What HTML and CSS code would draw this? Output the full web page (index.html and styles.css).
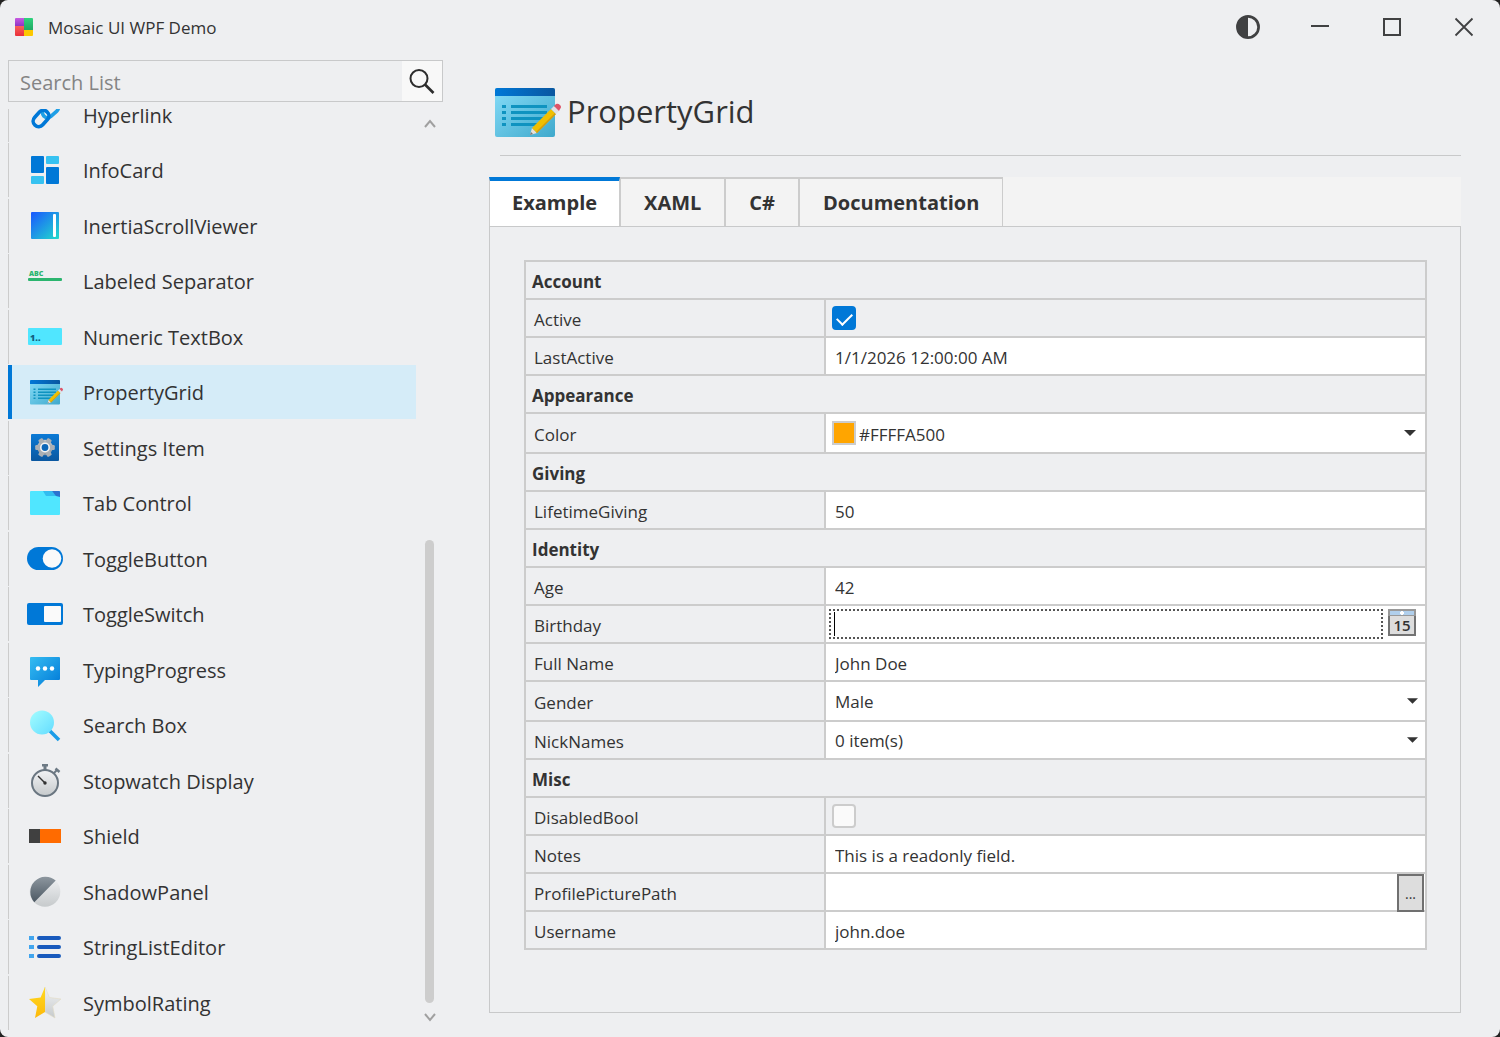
FILE: index.html
```html
<!DOCTYPE html>
<html lang="en">
<head>
<meta charset="utf-8">
<title>Mosaic UI WPF Demo</title>
<meta name="viewport" content="width=device-width, initial-scale=1">
<link rel="stylesheet" href="styles.css">
</head>
<body>
<svg class="defs" aria-hidden="true">
  <defs>
    <linearGradient id="paper" x1="0" y1="0" x2="1" y2="1"><stop offset="0" stop-color="#86dcf8"/><stop offset="1" stop-color="#3fa9cc"/></linearGradient>
    <linearGradient id="bar" x1="0" x2="1"><stop offset="0" stop-color="#0078d7"/><stop offset="1" stop-color="#0a57a0"/></linearGradient>
    <linearGradient id="purple" x1="0" y1="0" x2="0" y2="1"><stop offset="0" stop-color="#c75ae0"/><stop offset="1" stop-color="#8e35c4"/></linearGradient>
    <linearGradient id="red" x1="0" y1="0" x2="0" y2="1"><stop offset="0" stop-color="#f8605a"/><stop offset="1" stop-color="#ea2f3a"/></linearGradient>
    <linearGradient id="green" x1="0" y1="0" x2="0" y2="1"><stop offset="0" stop-color="#2fd27d"/><stop offset="1" stop-color="#21a863"/></linearGradient>
    <linearGradient id="scroll" x1="0" y1="0" x2="1" y2="1"><stop offset="0" stop-color="#1a57ff"/><stop offset="1" stop-color="#22dccb"/></linearGradient>
    <linearGradient id="tile" x1="0" y1="0" x2="0" y2="1"><stop offset="0" stop-color="#0b7ad6"/><stop offset="1" stop-color="#0a57a0"/></linearGradient>
    <linearGradient id="gear" x1="0" y1="0" x2="0" y2="1"><stop offset="0" stop-color="#c3c7cb"/><stop offset="1" stop-color="#8b959f"/></linearGradient>
    <linearGradient id="bubble" x1="0" y1="0" x2="1" y2="1"><stop offset="0" stop-color="#35bdf2"/><stop offset="1" stop-color="#0078d7"/></linearGradient>
    <linearGradient id="lens" x1="0" y1="0" x2="1" y2="1"><stop offset="0" stop-color="#a4fdff"/><stop offset="1" stop-color="#63dcff"/></linearGradient>
    <linearGradient id="steel" x1="0" y1="0" x2="0" y2="1"><stop offset="0" stop-color="#8d979f"/><stop offset="1" stop-color="#4c5863"/></linearGradient>
    <linearGradient id="silver" x1="0" y1="0" x2="0" y2="1"><stop offset="0" stop-color="#f2f3f5"/><stop offset="1" stop-color="#c6cacc"/></linearGradient>
    <linearGradient id="gold" x1="0" y1="0" x2="0" y2="1"><stop offset="0" stop-color="#ffd91f"/><stop offset="1" stop-color="#fdb90b"/></linearGradient>
    <symbol id="icon-grid" viewBox="0 0 66 50">
      <rect x="0" y="0" width="60" height="49" rx="2" fill="url(#paper)"/>
      <path d="M2 0h56q2 0 2 2v6H0V2q0-2 2-2z" fill="url(#bar)"/>
      <path d="M7 17h4v3H7zM7 23h4v3H7zM7 29h4v3H7zM7 35h4v3H7zM16 17h36v3H16zM16 23h36v3H16zM16 29h32v3H16zM16 35h26v3H16z" fill="#0f93c0"/>
      <path d="M35 47l2-7 5 5z" fill="#e8e0d8"/>
      <path d="M35 47l1-3 2 2z" fill="#777"/>
      <path d="M37 40l19-19 5 5-19 19z" fill="#f0bf00"/>
      <path d="M41 44l19-19 1 1-19 19z" fill="#cf9b12"/>
      <path d="M56 21l3-3 5 5-3 3z" fill="#dfe1e6"/>
      <path d="M59 18l2-2q2-1 4 1t0 4l-1 2z" fill="#dd5468"/>
    </symbol>
  </defs>
</svg>
<div class="window">
  <header class="titlebar">
    <svg class="logo" viewBox="0 0 18 18" aria-hidden="true"><path d="M1 0h8v8H0V1q0-1 1-1z" fill="url(#purple)"/><path d="M9 0h8q1 0 1 1v11H9z" fill="url(#green)"/><path d="M0 8h9v10H1q-1 0-1-1z" fill="url(#red)"/><path d="M9 12h9v5q0 1-1 1H9z" fill="#fcc800"/></svg>
    <h1 class="app-name">Mosaic UI WPF Demo</h1>
    <button class="caption" aria-label="Toggle theme"><svg width="24" height="24" viewBox="0 0 24 24"><circle cx="12" cy="12" r="10.6" fill="none" stroke="#404142" stroke-width="2.7"/><path d="M12 1a11 11 0 000 22z" fill="#404142"/></svg></button>
    <button class="caption" aria-label="Minimize"><svg width="20" height="20" viewBox="0 0 20 20"><path d="M1 8h18v2H1z" fill="#404142"/></svg></button>
    <button class="caption" aria-label="Maximize"><svg width="20" height="20" viewBox="0 0 20 20"><path d="M2 2h16v16H2z" fill="none" stroke="#404142" stroke-width="2"/></svg></button>
    <button class="caption" aria-label="Close"><svg width="20" height="20" viewBox="0 0 20 20"><path d="M1.500 1.500l17 17M18.500 1.500l-17 17" fill="none" stroke="#404142" stroke-width="1.800"/></svg></button>
  </header>
  <div class="body">
    <aside class="sidebar">
      <form class="search" role="search">
        <input class="search-input" type="search" placeholder="Search List" aria-label="Search List">
        <button class="search-button" type="button" aria-label="Search"><svg width="26" height="26" viewBox="0 0 26 26"><circle cx="10" cy="10.500" r="8.500" fill="none" stroke="#2d2d2d" stroke-width="2"/><path d="M16 16.500l8.500 8.500" stroke="#2d2d2d" stroke-width="2.600"/></svg></button>
      </form>
      <div class="list-area">
        <nav class="list-view" aria-label="Controls">
          <ul class="list">
            <li class="entry"><a class="link" href="#hyperlink"><svg class="icon" viewBox="0 0 36 36"><g fill="none" stroke-width="3.600"><rect x="-5" y="-9" width="10" height="18" rx="5" transform="translate(23.500 13) rotate(48)" stroke="#1f9fe6"/><rect x="-5.500" y="-9" width="11" height="18" rx="5.500" transform="translate(14 21.500) rotate(42)" stroke="#0078d7"/></g></svg>Hyperlink</a></li>
            <li class="entry"><a class="link" href="#infocard"><svg class="icon" viewBox="0 0 36 36"><rect x="4" y="4" width="13" height="17" rx="1" fill="#0078d7"/><rect x="19" y="15" width="13" height="17" rx="1" fill="#0078d7"/><rect x="19" y="4" width="13" height="8" rx="1" fill="#37c2f1"/><rect x="4" y="24" width="13" height="8" rx="1" fill="#37c2f1"/></svg>InfoCard</a></li>
            <li class="entry"><a class="link" href="#inertia"><svg class="icon" viewBox="0 0 36 36"><rect x="4" y="4" width="28" height="27" rx="1" fill="url(#scroll)"/><rect x="26" y="6" width="3" height="23" rx="1" fill="#fff"/></svg>InertiaScrollViewer</a></li>
            <li class="entry"><a class="link" href="#separator"><svg class="icon" viewBox="0 0 36 36"><text x="2" y="13" class="glyph-abc">ABC</text><rect x="1" y="15" width="34" height="3" rx="1" fill="#2bb56f"/></svg>Labeled Separator</a></li>
            <li class="entry"><a class="link" href="#numeric"><svg class="icon" viewBox="0 0 36 36"><rect x="1" y="9" width="34" height="17" rx="1" fill="#50e6ff"/><text x="3" y="22" class="glyph-num">1..</text></svg>Numeric TextBox</a></li>
            <li class="entry selected"><a class="link" href="#propertygrid" aria-current="page"><svg class="icon" viewBox="0 0 36 36"><use href="#icon-grid" x="3" y="6" width="33" height="25"/></svg>PropertyGrid</a></li>
            <li class="entry"><a class="link" href="#settings"><svg class="icon" viewBox="0 0 36 36"><rect x="4" y="4" width="28" height="27" rx="1" fill="url(#tile)"/><g fill="#a9afb5" transform="translate(18 17.500)"><circle r="7.800" fill="url(#gear)"/><rect x="-9.800" y="-2.500" width="19.600" height="5" rx="1.200"/><rect x="-9.800" y="-2.500" width="19.600" height="5" rx="1.200" transform="rotate(60)"/><rect x="-9.800" y="-2.500" width="19.600" height="5" rx="1.200" transform="rotate(120)"/></g><circle cx="18" cy="17.500" r="4.200" fill="#0b66b8" stroke="#f3f3f3" stroke-width="1.600"/></svg>Settings Item</a></li>
            <li class="entry"><a class="link" href="#tab"><svg class="icon" viewBox="0 0 36 36"><rect x="3" y="6" width="30" height="24" rx="1" fill="#50e6ff"/><path d="M16 6h9l5 5H19z" fill="#32bdf0"/><path d="M25 6h7q1 0 1 1v5l-4-1z" fill="#2b72cf"/></svg>Tab Control</a></li>
            <li class="entry"><a class="link" href="#togglebutton"><svg class="icon" viewBox="0 0 36 36"><rect x="0" y="6" width="36" height="23" rx="11.500" fill="#0078d7"/><circle cx="25" cy="17.500" r="9.300" fill="#fafafa"/></svg>ToggleButton</a></li>
            <li class="entry"><a class="link" href="#toggleswitch"><svg class="icon" viewBox="0 0 36 36"><rect x="0" y="7" width="36" height="22" rx="2" fill="#0078d7"/><rect x="17" y="10" width="17" height="16" rx="1" fill="#fafafa"/></svg>ToggleSwitch</a></li>
            <li class="entry"><a class="link" href="#typing"><svg class="icon" viewBox="0 0 36 36"><path d="M4 5h28q1 0 1 1v21q0 1-1 1H18l-7 7v-7H4q-1 0-1-1V6q0-1 1-1z" fill="url(#bubble)"/><circle cx="11" cy="16.500" r="2.200" fill="#fff"/><circle cx="18" cy="16.500" r="2.200" fill="#fff"/><circle cx="25" cy="16.500" r="2.200" fill="#fff"/></svg>TypingProgress</a></li>
            <li class="entry"><a class="link" href="#searchbox"><svg class="icon" viewBox="0 0 36 36"><path d="M22 23l10 10" stroke="#1b9ce8" stroke-width="3.600"/><circle cx="15" cy="15.500" r="12" fill="url(#lens)"/></svg>Search Box</a></li>
            <li class="entry"><a class="link" href="#stopwatch"><svg class="icon" viewBox="0 0 36 36"><path d="M15 1h6v2.500h-1.500V7h-3V3.500H15z" fill="#6c7984"/><path d="M27 10l3-3" stroke="#6c7984" stroke-width="2"/><path d="M28.500 5.500l4 3.500" stroke="#6c7984" stroke-width="2.500"/><circle cx="18" cy="20" r="13" fill="url(#silver)" stroke="#6a7681" stroke-width="2"/><path d="M11 13l7 7" stroke="#333" stroke-width="1.400"/><circle cx="18" cy="20" r="1.700" fill="#333"/></svg>Stopwatch Display</a></li>
            <li class="entry"><a class="link" href="#shield"><svg class="icon" viewBox="0 0 36 36"><rect x="2" y="11" width="11" height="14" fill="#404040"/><rect x="13" y="11" width="21" height="14" fill="#ff6b00"/></svg>Shield</a></li>
            <li class="entry"><a class="link" href="#shadow"><svg class="icon" viewBox="0 0 36 36"><circle cx="18" cy="17.500" r="15.300" fill="url(#silver)"/><path d="M7.300 28.300A15.300 15.300 0 0128.700 6.500z" fill="url(#steel)"/></svg>ShadowPanel</a></li>
            <li class="entry"><a class="link" href="#stringlist"><svg class="icon" viewBox="0 0 36 36"><path d="M2 7h5v4H2zM2 16h5v4H2zM2 25h5v4H2z" fill="#41a5ee"/><path d="M12 9h20M12 18h20M12 27h20" stroke="#185abd" stroke-width="4" stroke-linecap="round"/></svg>StringListEditor</a></li>
            <li class="entry"><a class="link" href="#rating"><svg class="icon" viewBox="0 0 36 36"><path d="M18 2l4.400 10.500L34 14l-8.300 7.300L28 33l-10-6z" fill="url(#silver)" stroke="#e3dcc4" stroke-width=".6"/><path d="M18 2l-4.400 10.500L2 14l8.300 7.300L8 33l10-6z" fill="url(#gold)"/></svg>SymbolRating</a></li>
          </ul>
        </nav>
        <div class="scrollbar" aria-hidden="true">
          <svg class="arrow" viewBox="0 0 12 10"><path d="M1 8l5-6 5 6" fill="none" stroke="#a0a0a0" stroke-width="2"/></svg>
          <div class="track"><div class="thumb"></div></div>
          <svg class="arrow" viewBox="0 0 12 10"><path d="M1 2l5 6 5-6" fill="none" stroke="#a0a0a0" stroke-width="2"/></svg>
        </div>
      </div>
    </aside>
    <main class="content">
      <div class="page-head">
        <svg class="page-icon" viewBox="0 0 66 50" aria-hidden="true"><use href="#icon-grid"/></svg>
        <h2 class="page-title">PropertyGrid</h2>
      </div>
      <div class="tabs" role="tablist">
        <button class="tab active" role="tab" aria-selected="true">Example</button>
        <button class="tab" role="tab" aria-selected="false">XAML</button>
        <button class="tab" role="tab" aria-selected="false">C#</button>
        <button class="tab" role="tab" aria-selected="false">Documentation</button>
      </div>
      <section class="panel">
        <table class="grid">
          <colgroup><col class="names"><col></colgroup>
          <tbody>
            <tr><th class="group" colspan="2" scope="rowgroup">Account</th></tr>
            <tr><th class="name" scope="row"><label for="active">Active</label></th><td><input class="check" id="active" type="checkbox" checked></td></tr>
            <tr><th class="name" scope="row"><label for="last">LastActive</label></th><td class="edit"><input class="text" id="last" type="text" value="1/1/2026 12:00:00 AM"></td></tr>
            <tr><th class="group" colspan="2" scope="rowgroup">Appearance</th></tr>
            <tr class="tall"><th class="name" scope="row"><label for="color">Color</label></th><td class="edit"><div class="picker"><span class="swatch"></span><select class="select" id="color"><option>#FFFFA500</option></select><svg class="drop" viewBox="0 0 12 6"><path d="M0 0h12L6 6z"/></svg></div></td></tr>
            <tr><th class="group" colspan="2" scope="rowgroup">Giving</th></tr>
            <tr><th class="name" scope="row"><label for="giving">LifetimeGiving</label></th><td class="edit"><input class="text" id="giving" type="text" value="50"></td></tr>
            <tr><th class="group" colspan="2" scope="rowgroup">Identity</th></tr>
            <tr><th class="name" scope="row"><label for="age">Age</label></th><td class="edit"><input class="text" id="age" type="text" value="42"></td></tr>
            <tr><th class="name" scope="row"><label for="birthday">Birthday</label></th><td class="edit"><div class="date"><input class="date-input" id="birthday" type="text"><button class="calendar" aria-label="Show calendar"><span class="calendar-top"></span>15</button></div></td></tr>
            <tr><th class="name" scope="row"><label for="full">Full Name</label></th><td class="edit"><input class="text" id="full" type="text" value="John Doe"></td></tr>
            <tr class="tall"><th class="name" scope="row"><label for="gender">Gender</label></th><td class="edit"><div class="combo"><select class="select" id="gender"><option>Male</option></select><svg class="drop" viewBox="0 0 12 6"><path d="M0 0h12L6 6z"/></svg></div></td></tr>
            <tr><th class="name" scope="row"><label for="nick">NickNames</label></th><td class="edit"><div class="combo"><select class="select" id="nick"><option>0 item(s)</option></select><svg class="drop" viewBox="0 0 12 6"><path d="M0 0h12L6 6z"/></svg></div></td></tr>
            <tr><th class="group" colspan="2" scope="rowgroup">Misc</th></tr>
            <tr><th class="name" scope="row"><label for="disabled">DisabledBool</label></th><td><input class="check" id="disabled" type="checkbox" disabled></td></tr>
            <tr><th class="name" scope="row"><label for="notes">Notes</label></th><td class="edit"><input class="text" id="notes" type="text" value="This is a readonly field." readonly></td></tr>
            <tr><th class="name" scope="row"><label for="path">ProfilePicturePath</label></th><td class="edit"><div class="file"><input class="text" id="path" type="text"><button class="browse" aria-label="Browse">...</button></div></td></tr>
            <tr><th class="name" scope="row"><label for="user">Username</label></th><td class="edit"><input class="text" id="user" type="text" value="john.doe"></td></tr>
          </tbody>
        </table>
      </section>
    </main>
  </div>
</div>
</body>
</html>
```
FILE: styles.css
```css
* {
  box-sizing: border-box;
}

body {
  margin: 0;
  background: #222;
  color: #333;
  font-family: "Open Sans", "Noto Sans", sans-serif;
  font-size: 16px;
}

button,
input,
select {
  margin: 0;
  padding: 0;
  border: 0;
  border-radius: 0;
  background: none;
  color: inherit;
  font: inherit;
}

.defs {
  display: block;
  width: 0;
  height: 0;
}

.window {
  display: flex;
  flex-direction: column;
  height: 100vh;
  border-radius: 8px;
  background: #eeeff1;
  overflow: hidden;
}

/* Title bar */
.titlebar {
  display: flex;
  align-items: center;
  height: 54px;
  padding-left: 15px;
}

.logo {
  width: 18px;
  height: 18px;
}

.app-name {
  flex: 1;
  margin: 0 0 0 15px;
  font-size: 17px;
  font-weight: 400;
}

.caption {
  display: flex;
  align-items: center;
  justify-content: center;
  width: 72px;
  height: 54px;
}

.body {
  display: flex;
  flex: 1;
  min-height: 0;
}

/* Sidebar */
.sidebar {
  display: flex;
  flex-direction: column;
  width: 443px;
  padding: 6px 0 6px 8px;
}

.search {
  display: flex;
  flex: none;
  height: 42px;
  border: 1px solid #c8c9ca;
}

.search-input {
  flex: 1;
  min-width: 0;
  padding: 2px 0 0 11px;
  font-size: 20px;
}

.search-input::placeholder {
  color: #848484;
}

.search-button {
  display: flex;
  align-items: center;
  justify-content: center;
  width: 40px;
  background: #f8f8f8;
}

.list-area {
  display: flex;
  flex: 1;
  min-height: 0;
  margin-top: 7px;
}

.list-view {
  display: flex;
  flex: 1;
  flex-direction: column;
  justify-content: flex-end;
  overflow: hidden;
}

.list {
  margin: 0;
  padding: 0;
  list-style: none;
}

.entry {
  height: 55px;
}

.entry:nth-child(even) {
  height: 56px;
}

.link {
  display: flex;
  align-items: center;
  gap: 20px;
  height: 54px;
  padding-left: 18px;
  border-left: 1px solid #ccc;
  color: inherit;
  font-size: 20px;
  text-decoration: none;
}

.selected .link {
  padding-left: 15px;
  border-left: 4px solid #0078d7;
  background: #d5ecf8;
}

.icon {
  flex: none;
  width: 36px;
  height: 36px;
}

.glyph-abc {
  fill: #2bb56f;
  font-size: 7px;
  font-weight: 800;
}

.glyph-num {
  fill: #12607f;
  font-size: 9px;
  font-weight: 800;
}

.scrollbar {
  display: flex;
  flex-direction: column;
  align-items: center;
  width: 27px;
  padding: 10px 0 9px;
}

.arrow {
  width: 12px;
  height: 10px;
}

.track {
  display: flex;
  flex: 1;
  flex-direction: column;
  justify-content: flex-end;
  padding-bottom: 9px;
}

.thumb {
  width: 9px;
  height: 53%;
  border-radius: 5px;
  background: #cdcdcd;
}

/* Page */
.content {
  display: flex;
  flex: 1;
  flex-direction: column;
  min-width: 0;
  padding: 26px 39px 24px 46px;
}

.page-head {
  display: flex;
  align-items: center;
  gap: 6px;
  height: 76px;
  margin-bottom: 21px;
  padding: 0 0 10px 6px;
  background: linear-gradient(#c8c9ca, #c8c9ca) 11px 100% / 100% 1px no-repeat;
}

.page-icon {
  width: 66px;
  height: 50px;
}

.page-title {
  margin: 0;
  padding-bottom: 4px;
  font-size: 31px;
  font-weight: 400;
}

.tabs {
  display: flex;
  height: 49px;
  background: #f3f3f3;
}

.tab {
  padding: 0 23px;
  border: 2px solid #ccc;
  border-width: 2px 1px 0;
  font-size: 20px;
  font-weight: 700;
}

.tab.active {
  padding: 0 22px 2px;
  border-top: 4px solid #0078d7;
  background: #fff;
}

.panel {
  flex: 1;
  padding: 33px 33px 0 34px;
  border: 1px solid #c8c9ca;
}

/* Property grid */
.grid {
  width: 100%;
  border-collapse: collapse;
  table-layout: fixed;
}

.names {
  width: 300px;
}

tr {
  height: 38px;
}

.tall {
  height: 40px;
}

th,
td {
  height: inherit;
  padding: 0;
  border: 2px solid #ccc;
  text-align: left;
}

.group {
  padding: 2px 0 0 6px;
  font-size: 17px;
  font-weight: 700;
}

.name {
  padding: 2px 0 0 8px;
  font-size: 17px;
  font-weight: 400;
}

.edit {
  background: #fff;
}

.text {
  display: block;
  width: 100%;
  height: 36px;
  padding: 2px 0 0 9px;
  font-size: 17px;
}

.check {
  display: block;
  width: 24px;
  height: 24px;
  margin-left: 6px;
  border: 2px solid #ccc;
  border-radius: 4px;
  background: #fafafa;
  appearance: none;
}

.check:checked {
  border-color: #0078d7;
  background: #0078d7;
}

.check:checked::before {
  content: "";
  display: block;
  width: 13px;
  height: 7px;
  margin: 5px 0 0 3px;
  border: solid #fff;
  border-width: 0 0 2px 2px;
  transform: rotate(-45deg);
}

.combo,
.picker {
  display: flex;
  align-items: center;
  height: 36px;
  padding-right: 7px;
}

.picker {
  gap: 3px;
  padding: 0 9px 0 6px;
}

.swatch {
  width: 24px;
  height: 24px;
  border: 2px solid #ccc;
  background: #ffa500;
}

.select {
  flex: 1;
  min-width: 0;
  height: 36px;
  padding-top: 2px;
  font-size: 17px;
  appearance: none;
}

.combo .select {
  padding: 0 0 0 9px;
}

.drop {
  width: 12px;
  height: 6px;
  fill: #333;
}

.combo .drop {
  width: 11px;
}

.date {
  display: flex;
  align-items: flex-start;
  gap: 5px;
  height: 36px;
  padding: 3px 9px 0 3px;
}

.date-input {
  flex: 1;
  min-width: 0;
  height: 30px;
  border: 2px dotted #555;
  outline: 0;
  background: linear-gradient(#000, #000) 3px 50% / 1px 24px no-repeat;
}

.calendar {
  display: flex;
  flex-direction: column;
  align-items: stretch;
  width: 28px;
  height: 27px;
  border: 2px solid #737373;
  border-top: 0;
  background: #ddd;
  font-size: 15px;
  font-weight: 600;
  line-height: 18px;
}

.calendar-top {
  height: 8px;
  margin: 0 -2px;
  border: 2px solid #999;
  border-bottom-width: 1px;
  background: radial-gradient(circle, #fff 2px, #b0cfec 2px);
}

.file {
  display: flex;
  padding-right: 1px;
}

.browse {
  width: 28px;
  height: 38px;
  margin-bottom: -2px;
  border: 2px solid #707070;
  background: #ddd;
  font-size: 14px;
}
```
